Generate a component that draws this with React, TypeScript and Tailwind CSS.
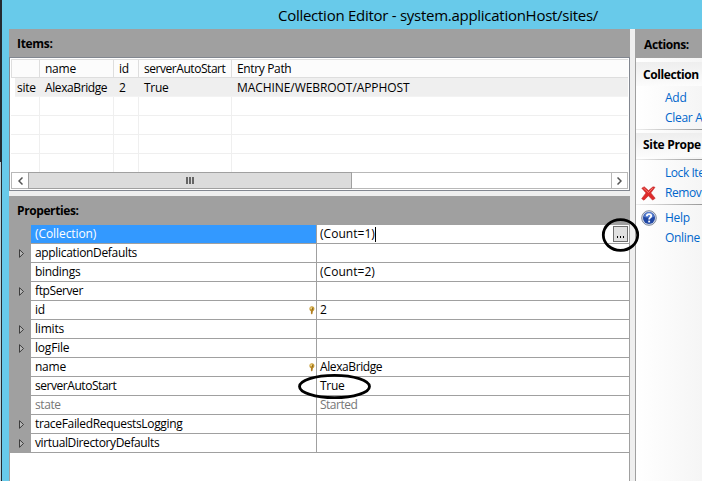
import React from "react";

type Prop = { name: string; value?: string; tree?: boolean; locked?: boolean; dim?: boolean; selected?: boolean; w: string; vw?: string };

const props: Prop[] = [
  { name: "(Collection)", value: "(Count=1)", selected: true, w: "tracking-[-0.08px]", vw: "tracking-[0.03px]" },
  { name: "applicationDefaults", tree: true, w: "tracking-[-0.33px]" },
  { name: "bindings", value: "(Count=2)", w: "tracking-[-0.3px]", vw: "tracking-[0.03px]" },
  { name: "ftpServer", tree: true, w: "tracking-[-0.4px]" },
  { name: "id", value: "2", locked: true, w: "tracking-[-0.25px]" },
  { name: "limits", tree: true, w: "tracking-[-0.2px]" },
  { name: "logFile", tree: true, w: "tracking-[-0.2px]" },
  { name: "name", value: "AlexaBridge", locked: true, w: "tracking-[-0.25px]", vw: "tracking-[-0.4px]" },
  { name: "serverAutoStart", value: "True", w: "tracking-[-0.45px]" },
  { name: "state", value: "Started", dim: true, w: "tracking-[-0.4px]", vw: "tracking-[-0.5px]" },
  { name: "traceFailedRequestsLogging", tree: true, w: "tracking-[-0.33px]" },
  { name: "virtualDirectoryDefaults", tree: true, w: "tracking-[-0.38px]" },
];

const columns = "grid grid-cols-[29px_74px_25px_93px_1fr]";

function Key() {
  return (
    <svg width="6" height="9" viewBox="0 0 6 9" className="mr-[1px]">
      <circle cx="2.9" cy="2.8" r="2.5" fill="#c69a36" />
      <path d="M1.9 4.3h2v1.4L3.3 6l.6.8-1 1.7-1-1z" fill="#b17d20" />
      <path d="M1.3 1.5h1.8v1.2H1.3z" fill="#ffedaa" />
      <path d="M3 2.6h1v1H3z" fill="#593e15" />
    </svg>
  );
}

function Row({ p }: { p: Prop }) {
  return (
    <div className="flex h-[19px]">
      <div className="flex w-[22px] items-center justify-center bg-[#a0a0a0]">
        {p.tree && (
          <svg width="5" height="9" viewBox="0 0 5 9" className="ml-[2px]">
            <path d="M.5.7v7.6L4.5 4.5z" fill="#b8b8b8" stroke="#303030" strokeWidth=".9" />
          </svg>
        )}
      </div>
      <div className={`flex w-[285px] items-center justify-between border-b border-[#a0a0a0] pl-1 ${p.selected ? "bg-[#3399ff] text-white" : p.dim ? "text-[#777]" : ""}`}>
        <span className={p.w}>{p.name}</span>
        {p.locked && <Key />}
      </div>
      <div className={`flex flex-1 items-center border-b border-l border-[#a0a0a0] pl-[3px] ${p.dim ? "text-[#777]" : ""}`}>
        <span className={p.vw ?? "tracking-[-0.25px]"}>{p.value}</span>
        {p.selected && (
          <>
            <i className="h-[15px] w-px bg-black" />
            <button className="ml-auto mr-px flex h-4 w-[15px] items-end justify-center gap-[2px] border border-[#707070] bg-[#e1e1e1] pb-[3px]">
              <i className="h-[2px] w-px bg-black" />
              <i className="h-[2px] w-px bg-black" />
              <i className="h-[2px] w-px bg-black" />
            </button>
          </>
        )}
      </div>
    </div>
  );
}

function Items() {
  return (
    <section className="h-[162px] bg-[#a0a0a0]">
      <h2 className="flex h-7 items-center pl-2 pt-[1px] font-bold tracking-[-0.3px]">Items:</h2>
      <div className="flex h-[134px] flex-col border border-[#828790] bg-white px-px pb-px pt-px">
        <div className={`${columns} h-[19px] shrink-0 border-y border-[#dedede] bg-[#fcfcfc] leading-[18px]`}>
          <span className="border-x border-[#dedede]" />
          <span className="border-r border-[#dedede] pl-[5px] tracking-[-0.25px]">name</span>
          <span className="border-r border-[#dedede] pl-[5px] tracking-[-0.25px]">id</span>
          <span className="border-r border-[#dedede] pl-[5px] tracking-[-0.45px]">serverAutoStart</span>
          <span className="pl-[5px] tracking-[-0.35px]">Entry Path</span>
        </div>
        <div className={`${columns} ml-1 h-[19px] shrink-0 border-b border-[#f3f3f3] bg-[#efefef] leading-[20px]`}>
          <span className="pl-[2px] tracking-[-0.3px]">site</span>
          <span className="pl-px tracking-[-0.4px]">AlexaBridge</span>
          <span className="pl-px tracking-[-0.25px]">2</span>
          <span className="pl-px tracking-[-0.25px]">True</span>
          <span className="pl-px tracking-[-0.07px]">MACHINE/WEBROOT/APPHOST</span>
        </div>
        {[0, 1, 2, 3].map((r) => (
          <div key={r} className={`${columns} shrink-0 ${r === 3 ? "h-[18px]" : "h-[19px] border-b border-[#efefef]"}`}>
            {[0, 1, 2, 3].map((c) => <span key={c} className="border-r border-[#efefef]" />)}
          </div>
        ))}
        <div className="flex h-[17px] shrink-0 border border-[#b8b8b8] bg-white">
          <div className="flex w-4 items-center justify-center">
            <svg width="5" height="8" viewBox="0 0 5 8"><path d="M4.5.5 1 4l3.5 3.5" fill="none" stroke="#555" strokeWidth="1.5" /></svg>
          </div>
          <div className="-my-px flex w-[324px] items-center justify-center gap-px border border-[#a0a0a0] bg-[#dcdcdc]">
            <i className="h-[7px] w-[2px] bg-[#666]" /><i className="h-[7px] w-[2px] bg-[#666]" /><i className="h-[7px] w-[2px] bg-[#666]" />
          </div>
          <div className="ml-auto flex w-4 items-center justify-center border-l border-[#b8b8b8]">
            <svg width="5" height="8" viewBox="0 0 5 8"><path d="M.5.5 4 4 .5 7.5" fill="none" stroke="#555" strokeWidth="1.5" /></svg>
          </div>
        </div>
      </div>
    </section>
  );
}

function Actions() {
  return (
    <aside className="w-[67px] shrink-0 overflow-hidden whitespace-nowrap border-l border-[#a0a0a0] bg-linear-to-r from-white to-[#f5f5f5]">
      <h2 className="flex h-[29px] items-center bg-[#a0a0a0] pl-2 pt-[2px] font-bold tracking-[-0.4px]">Actions:</h2>
      <h3 className="mt-1 flex h-6 items-center bg-linear-to-b from-[#eeeeee] to-[#fcfcfc] pl-[7px] pt-px font-bold tracking-[-0.4px]">Collection</h3>
      <ul className="mt-[2px] text-[#0066cc]">
        <li className="flex h-5 items-center pl-[29px] tracking-[-0.25px]">Add</li>
        <li className="flex h-5 items-center pl-[29px] tracking-[-0.3px]">Clear A</li>
      </ul>
      <i className="mt-[1px] block h-px bg-linear-to-r from-[#eee] to-[#999]" />
      <h3 className="mt-[3px] flex h-6 items-center bg-linear-to-b from-[#eeeeee] to-[#fcfcfc] pl-[7px] font-bold tracking-[-0.3px]">Site Prope</h3>
      <i className="mt-[2px] block h-px bg-linear-to-r from-[#eee] to-[#999]" />
      <ul className="mt-[3px] text-[#0066cc]">
        <li className="flex h-5 items-center pl-[29px] tracking-[-0.45px]">Lock Ite</li>
        <li className="flex h-5 items-center pl-[5px] tracking-[-0.4px]">
          <svg width="15" height="15" viewBox="0 0 15 15" className="mr-[9px] shrink-0">
            <path d="M.8 2.2 3.2.8 7.5 4.6 12 .8l2 .5-4.2 5.6 4.4 5.4-2.6 1.8-4.2-4.4L3 14.2.7 12.7l4.3-5.8z" fill="#df2b2b" stroke="#bd2929" strokeWidth=".6" />
            <path d="m2.5 2 5 4.5 4.3-4.3" fill="none" stroke="#f58a80" strokeWidth=".8" />
          </svg>
          Remov
        </li>
      </ul>
      <i className="mt-[1px] block h-px bg-linear-to-r from-[#eee] to-[#999]" />
      <ul className="mt-[3px] text-[#0066cc]">
        <li className="flex h-5 items-center pl-[5px] tracking-[-0.25px]">
          <svg width="16" height="16" viewBox="0 0 16 16" className="mr-2 shrink-0">
            <circle cx="8" cy="8" r="7.3" fill="#d8deeb" stroke="#808a9d" />
            <circle cx="8" cy="8" r="6" fill="#2148a5" />
            <path d="M3 7a5 5 0 0 1 10 0Q8 8 3 7" fill="#577fd0" />
            <path d="M5.8 6.3C5.8 3.3 10.3 3.5 10.2 6c0 1.5-2.1 1.7-2.1 3.4" fill="none" stroke="#fff" strokeWidth="1.8" />
            <path d="M7.2 10.6h1.9v1.8H7.2z" fill="#fff" />
          </svg>
          Help
        </li>
        <li className="flex h-5 items-center pl-[29px] tracking-[-0.3px]">Online</li>
      </ul>
    </aside>
  );
}

export default function App() {
  return (
    <div className="relative flex h-[481px] w-[702px] overflow-hidden bg-[#68caea] font-['Open_Sans','Noto_Sans',sans-serif] text-[12px] leading-[18px] text-black">
      <div className="flow-root w-[2px] shrink-0 bg-[#242a30]">
        <div className="mt-[162px] h-[319px] w-px bg-[#b9d0d7]" />
      </div>
      <div className="ml-[7px] flex w-[693px] shrink-0 flex-col">
        <header className="h-[29px] whitespace-nowrap pl-[269px] text-[15px] leading-[30px] tracking-[-0.27px]">Collection Editor - system.applicationHost/sites/</header>
        <main className="flex flex-1 bg-[#efefef]">
          <div className="flex w-[621px] shrink-0 flex-col">
            <Items />
            <section className="mt-[5px] flex flex-1 flex-col bg-[#a0a0a0]">
              <h2 className="flex h-[29px] items-center pl-2 font-bold tracking-[-0.4px]">Properties:</h2>
              <div className="flex-1 border-r border-[#a0a0a0] bg-white">
                {props.map((p) => <Row key={p.name} p={p} />)}
                <div className="h-7 border-l border-[#a0a0a0]" />
              </div>
            </section>
          </div>
          <div className="w-[5px] shrink-0" />
          <Actions />
        </main>
      </div>
      <svg className="pointer-events-none absolute inset-0" width="702" height="481" fill="none" stroke="#000">
        <ellipse cx="620.5" cy="235" rx="17.2" ry="15.4" strokeWidth="2.8" />
        <ellipse cx="334.5" cy="386.5" rx="35" ry="11.2" strokeWidth="2.8" />
      </svg>
    </div>
  );
}
